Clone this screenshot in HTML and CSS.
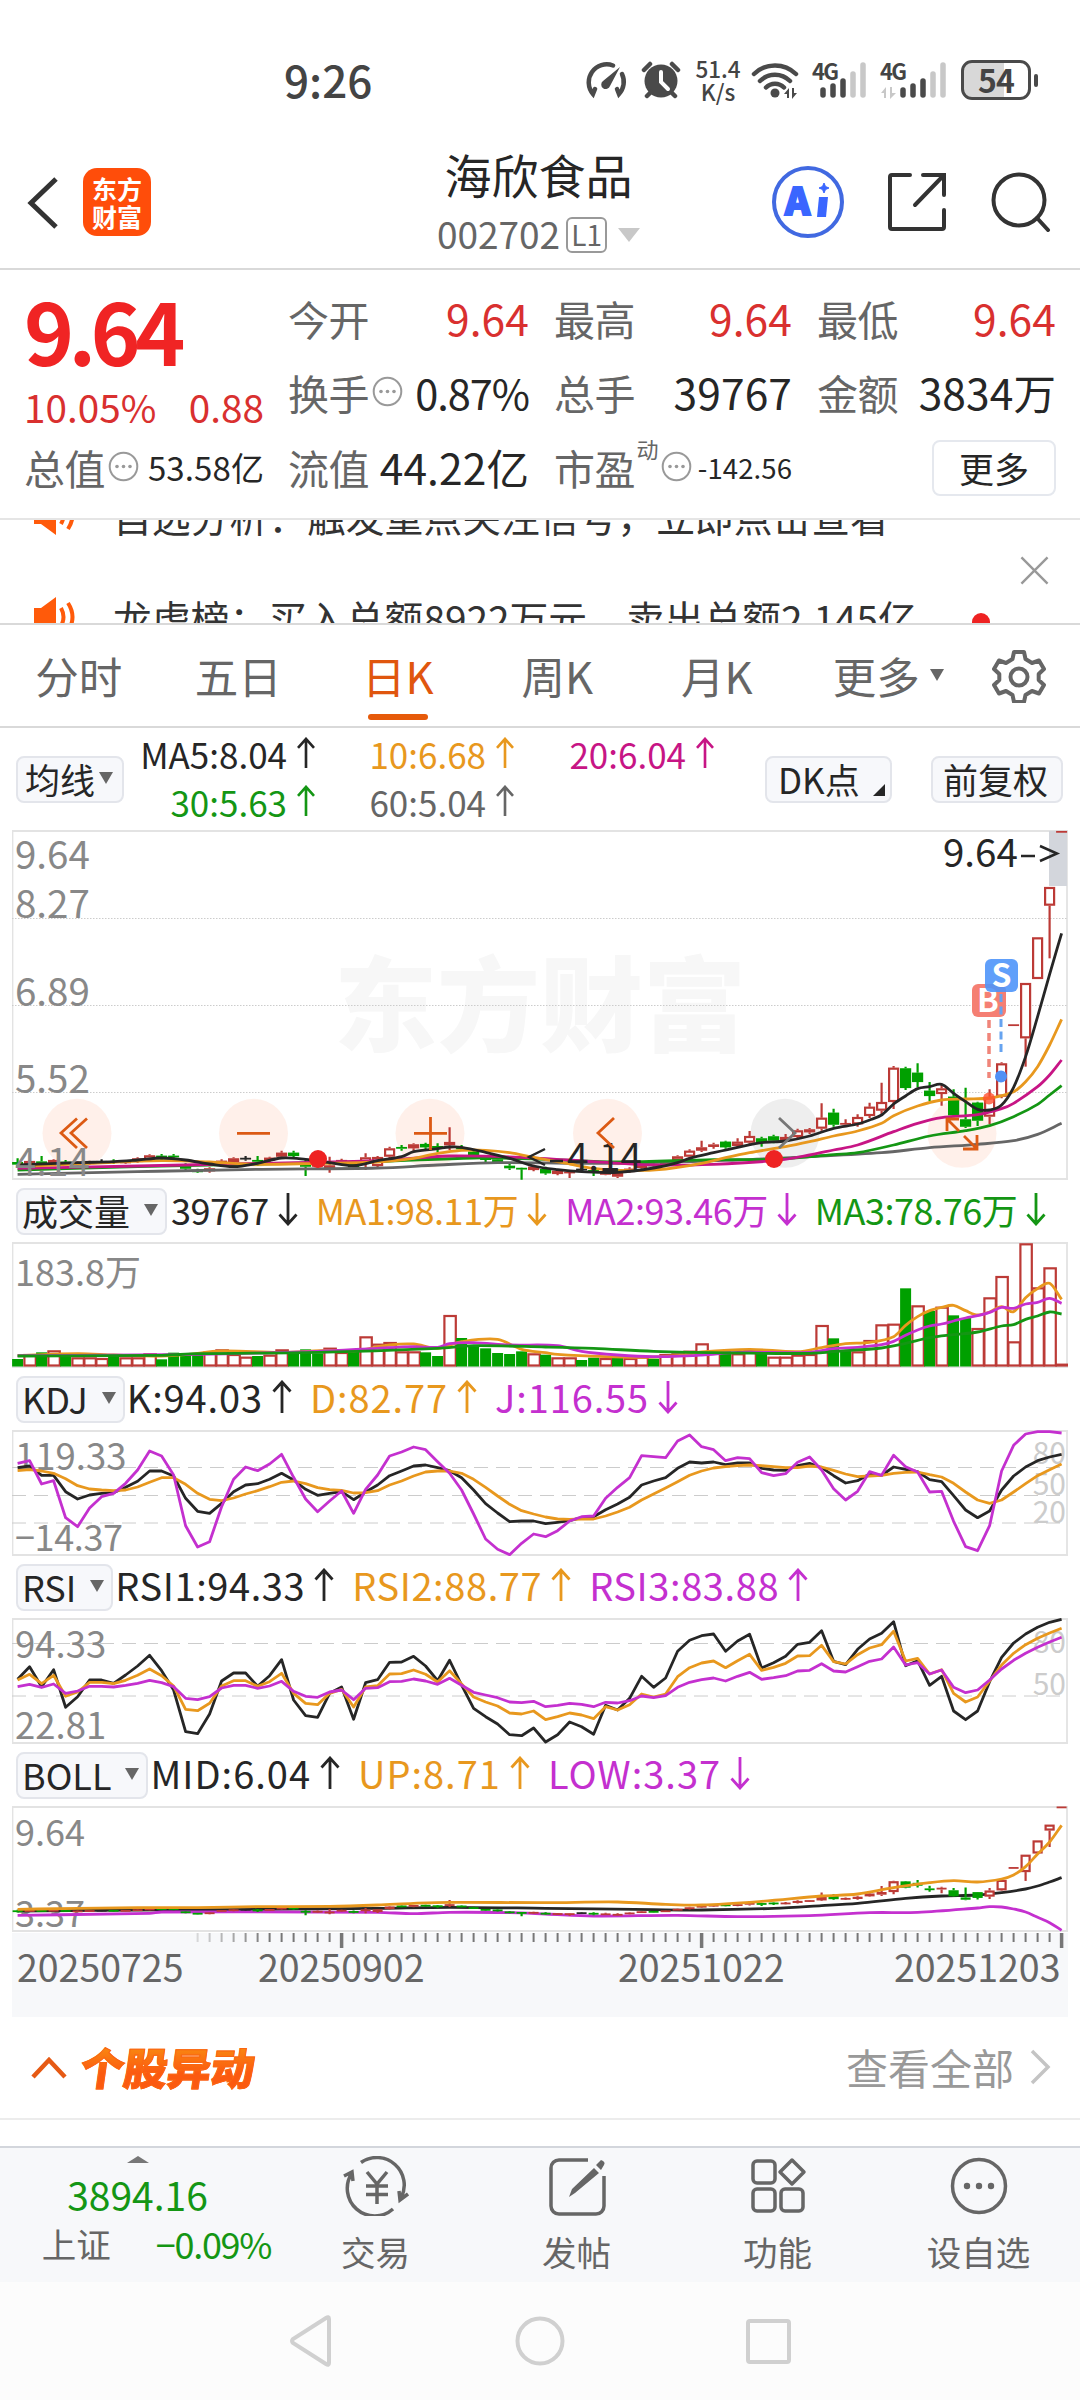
FILE: index.html
```html
<!DOCTYPE html>
<html lang="zh-CN">
<head>
<meta charset="utf-8">
<title>海欣食品 002702</title>
<link rel="stylesheet" href="styles.css">
</head>
<body>
<svg class="defs" width="0" height="0">
  <symbol id="up" viewBox="0 0 20 34"><path d="M10 33V2M1.5 11.5 10 2l8.5 9.5"/></symbol>
  <symbol id="down" viewBox="0 0 20 34"><path d="M10 1v31M1.5 22.500 10 32l8.500-9.500"/></symbol>
  <symbol id="info" viewBox="0 0 31 31"><circle cx="15.500" cy="15.500" r="13.800" fill="none" stroke="#999" stroke-width="2"/><g fill="#999"><circle cx="9" cy="15.500" r="1.800"/><circle cx="15.500" cy="15.500" r="1.800"/><circle cx="22" cy="15.500" r="1.800"/></g></symbol>
  <symbol id="horn" viewBox="0 0 44 42"><path d="M1 12h7L23 1v40L8 30H1z" fill="#ff5a0a"/><path d="M28 12q5 9 0 18M35 7q9 14 0 28" fill="none" stroke="#ff5a0a" stroke-width="4"/></symbol>
</svg>

<header class="status">
  <span class="clock">9:26</span>
  <div class="status-icons">
    <svg width="42" height="38" viewBox="0 0 42 38"><g fill="none" stroke="#4a4a4a" stroke-width="4.500" stroke-linecap="round"><path d="M28 4.500A18 18 0 0 0 8 33l2-5"/><path d="M37 13a18 18 0 0 1-3 20l-2-5"/></g><path d="M35 6 25 25a4.500 4.500 0 1 1-7-5z" fill="#4a4a4a"/></svg>
    <svg width="40" height="38" viewBox="0 0 40 38"><circle cx="20" cy="20" r="16.500" fill="#4a4a4a"/><path d="M3 9l6-6M37 9l-6-6M6 35l4-4M34 35l-4-4" stroke="#4a4a4a" stroke-width="4.500" stroke-linecap="round"/><path d="M20 11v10l7 7" fill="none" stroke="#fff" stroke-width="4" stroke-linecap="round"/></svg>
    <div class="speed"><span>51.4</span><span>K/s</span></div>
    <svg width="48" height="38" viewBox="0 0 48 38"><g fill="none" stroke="#4a4a4a" stroke-width="4.500" stroke-linecap="round"><path d="M3 13a30 30 0 0 1 42 0M9 20a21 21 0 0 1 30 0M15 26.500a12.500 12.500 0 0 1 18 0"/></g><circle cx="24" cy="32" r="4.500" fill="#4a4a4a"/><path d="M33 33l5-6v10h-2v-4zM46 32l-5 6V27h2v5z" fill="#4a4a4a"/></svg>
    <div class="signal"><b>4G</b><svg width="54" height="38" viewBox="0 0 54 38"><g stroke-width="5.500" stroke-linecap="round" stroke="#4a4a4a"><path d="M11 29v5M21 25v9M31 20v14"/><path d="M41 13v21M51 4v30" stroke="#c8c8c8"/></g></svg></div>
    <div class="signal wide"><b>4G</b><svg width="66" height="38" viewBox="0 0 66 38"><path d="M1 32l5-6v11H4v-5zM16 32l-6 6V26h2v6z" fill="#c8c8c8"/><g stroke-width="5.500" stroke-linecap="round" stroke="#4a4a4a"><path d="M23 29v5M33 25v9M43 20v14"/><path d="M53 13v21M63 4v30" stroke="#c8c8c8"/></g></svg></div>
    <div class="battery"><span>54</span></div>
  </div>
</header>

<nav class="titlebar">
  <svg class="back" width="36" height="60" viewBox="0 0 36 60"><path d="M31 6 6 30l25 24" fill="none" stroke="#333" stroke-width="5"/></svg>
  <div class="brand"><span>东方</span><span>财富</span></div>
  <div class="stock">
    <h1>海欣食品</h1>
    <div class="code"><span>002702</span><i class="level">L1</i><i class="caret"></i></div>
  </div>
  <div class="tools">
    <svg width="72" height="72" viewBox="0 0 72 72"><circle cx="36" cy="36" r="34" fill="none" stroke="#4169e1" stroke-width="4"/><text x="13" y="49" class="ai">A</text><path d="M47 31h9l-2 20h-9z" fill="#3a66ff"/><path d="M52 17l1.500 3.500L57 22l-3.500 1.500L52 27l-1.500-3.500L47 22l3.500-1.500z" fill="#3a66ff" stroke="#3a66ff"/></svg>
    <svg width="60" height="60" viewBox="0 0 60 60"><path d="M23 3H5a2 2 0 0 0-2 2v50a2 2 0 0 0 2 2h50a2 2 0 0 0 2-2V38M36 3h21v20M57 3 28 33" fill="none" stroke="#333" stroke-width="4" stroke-linecap="round"/></svg>
    <svg width="62" height="60" viewBox="0 0 62 60"><circle cx="29" cy="28" r="25.500" fill="none" stroke="#333" stroke-width="4"/><path d="M47 46l11 12" stroke="#333" stroke-width="4" stroke-linecap="round"/></svg>
  </div>
</nav>

<section class="quote">
  <div class="price">
    <strong>9.64</strong>
    <div class="chg"><span>10.05%</span><span>0.88</span></div>
    <div class="cell small"><label>总值</label><svg class="info"><use href="#info"/></svg><em>53.58亿</em></div>
  </div>
  <div class="cells">
    <div class="cell red"><label>今开</label><em>9.64</em></div>
    <div class="cell red"><label>最高</label><em>9.64</em></div>
    <div class="cell red"><label>最低</label><em>9.64</em></div>
    <div class="cell tight"><label>换手</label><svg class="info"><use href="#info"/></svg><em>0.87%</em></div>
    <div class="cell"><label>总手</label><em>39767</em></div>
    <div class="cell"><label>金额</label><em>3834万</em></div>
    <div class="cell"><label>流值</label><em>44.22亿</em></div>
    <div class="cell tiny"><label>市盈<sup>动</sup></label><svg class="info"><use href="#info"/></svg><em>-142.56</em></div>
    <button class="more">更多</button>
  </div>
</section>

<section class="ticker">
  <div class="news">
    <p><svg><use href="#horn"/></svg>自选分析：触发重点关注信号，立即点击查看</p>
    <p><svg><use href="#horn"/></svg>龙虎榜：买入总额8922万元，卖出总额2.145亿</p>
  </div>
  <svg class="close" viewBox="0 0 30 30"><path d="M1.500 1.500l27 27M28.500 1.500l-27 27"/></svg>
  <i class="dot"></i>
</section>

<nav class="tabs">
  <a>分时</a><a>五日</a><a class="on">日K</a><a>周K</a><a>月K</a><a class="drop">更多</a>
  <svg width="54" height="54" viewBox="0 0 54 54"><path d="M22 3h10l1.500 7 6.500 4 7-2.500 5 8.500-5.300 5v6l5.300 5-5 8.500-7-2.500-6.500 4L32 53H22l-1.500-7-6.500-4-7 2.500L2 36l5.300-5v-6L2 20l5-8.500L14 14l6.500-4z" fill="none" stroke="#666" stroke-width="4" stroke-linejoin="round"/><circle cx="27" cy="28" r="8.500" fill="none" stroke="#666" stroke-width="4"/></svg>
</nav>

<section class="ma">
  <button class="pill ma-pick">均线<i></i></button>
  <div class="ma-grid">
    <span class="c-k">MA5:8.04<svg><use href="#up"/></svg></span>
    <span class="c-o">10:6.68<svg><use href="#up"/></svg></span>
    <span class="c-m">20:6.04<svg><use href="#up"/></svg></span>
    <span class="c-g">30:5.63<svg><use href="#up"/></svg></span>
    <span class="c-s">60:5.04<svg><use href="#up"/></svg></span>
  </div>
  <button class="pill dk">DK点<i></i></button>
  <button class="pill fq">前复权</button>
</section>

<main class="charts">
  <svg class="chart" id="kline" viewBox="12 10 1056 350" width="1056" height="350"></svg>
  <div class="legend vol"><button class="pill">成交量<i></i></button>
    <span class="c-k">39767<svg><use href="#down"/></svg></span><span class="c-o">MA1:98.11万<svg><use href="#down"/></svg></span><span class="c-p">MA2:93.46万<svg><use href="#down"/></svg></span><span class="c-g">MA3:78.76万<svg><use href="#down"/></svg></span></div>
  <svg class="chart" id="volume" viewBox="12 62 1056 126" width="1056" height="126"></svg>
  <div class="legend kdj"><button class="pill">KDJ<i></i></button>
    <span class="c-k">K:94.03<svg><use href="#up"/></svg></span><span class="c-o">D:82.77<svg><use href="#up"/></svg></span><span class="c-p">J:116.55<svg><use href="#down"/></svg></span></div>
  <svg class="chart" id="kdj" viewBox="12 250 1056 126" width="1056" height="126"></svg>
  <div class="legend"><button class="pill">RSI<i></i></button>
    <span class="c-k">RSI1:94.33<svg><use href="#up"/></svg></span><span class="c-o">RSI2:88.77<svg><use href="#up"/></svg></span><span class="c-p">RSI3:83.88<svg><use href="#up"/></svg></span></div>
  <svg class="chart" id="rsi" viewBox="12 58 1056 126" width="1056" height="126"></svg>
  <div class="legend boll"><button class="pill">BOLL<i></i></button>
    <span class="c-k">MID:6.04<svg><use href="#up"/></svg></span><span class="c-o">UP:8.71<svg><use href="#up"/></svg></span><span class="c-p">LOW:3.37<svg><use href="#down"/></svg></span></div>
  <svg class="chart" id="boll" viewBox="12 246 1056 127" width="1056" height="127"></svg>
  <svg class="axis" id="axis" viewBox="12 373 1056 84" width="1056" height="84"></svg>
</main>

<section class="moves">
  <svg width="38" height="26" viewBox="0 0 38 26"><path d="M3 23 19 6l16 17" fill="none" stroke="#e65a14" stroke-width="4.500"/></svg>
  <h2>个股异动</h2>
  <a>查看全部</a>
  <svg class="go" width="22" height="38" viewBox="0 0 22 38"><path d="M3 3l16 16L3 35" fill="none" stroke="#c4c4c4" stroke-width="3.500"/></svg>
</section>

<footer class="bottombar">
  <div class="index">
    <i></i><b>3894.16</b>
    <div><span>上证</span><em>−0.09%</em></div>
  </div>
  <a><svg viewBox="0 0 66 60"><g fill="none" stroke="#666" stroke-width="3.500"><path d="M18 6.500A27.500 27.500 0 0 1 58 42M65 38l-8 6-1-9"/><path d="M50 53A27.500 27.500 0 0 1 9 17M1 20l8-4 1 9"/><path d="M24 16l10 12 10-12M34 28v20M23 30h22M23 38.500h22"/></g></svg>交易</a>
  <a><svg viewBox="0 0 66 60"><path d="M44 4H15a8 8 0 0 0-8 8v38a8 8 0 0 0 8 8h37a8 8 0 0 0 8-8V20" fill="none" stroke="#666" stroke-width="3.500"/><path d="M50 12l5 5-24 20-6 4 3-8zM52 9l5-5q5 2 3 5l-3 5z" fill="#666"/></svg>发帖</a>
  <a><svg viewBox="0 0 66 60"><g fill="none" stroke="#666" stroke-width="3.500" stroke-linejoin="round"><rect x="8" y="5" width="22" height="22" rx="4"/><rect x="8" y="33" width="22" height="22" rx="4"/><rect x="36" y="33" width="22" height="22" rx="4"/><path d="M47 4l12 12-12 12-12-12z"/></g></svg>功能</a>
  <a><svg viewBox="0 0 66 60"><circle cx="33" cy="30" r="26.500" fill="none" stroke="#666" stroke-width="3.500"/><g fill="#666"><circle cx="21" cy="30" r="3.200"/><circle cx="33" cy="30" r="3.200"/><circle cx="45" cy="30" r="3.200"/></g></svg>设自选</a>
</footer>

<div class="sysnav">
  <svg viewBox="0 0 50 54"><path d="M42 5v44q0 3-3 1L6 29q-2-2 0-4L39 4q3-2 3 1z"/></svg>
  <svg viewBox="0 0 50 54"><circle cx="25" cy="27" r="22.500"/></svg>
  <svg viewBox="0 0 50 54"><rect x="5" y="7" width="41" height="41" rx="2"/></svg>
</div>
<script src="script.js"></script>
</body>
</html>
```
FILE: styles.css
```css
* { box-sizing: border-box; }
body { margin: 0; width: 1080px; background: #fff; color: #262626; font-family: "Noto Sans CJK SC", "Noto Sans", sans-serif; line-height: 1; }
button { font: inherit; color: inherit; padding: 0; white-space: nowrap; }
h1, h2, p { margin: 0; font-weight: 400; }
i, em { font-style: normal; }
.defs { display: block; height: 0; }
use { stroke: inherit; }

.status { display: flex; justify-content: space-between; align-items: center; height: 160px; padding: 0 49px 0 284px; color: #444; }
.clock { font-size: 44px; font-weight: 500; margin-top: -3px; }
.status-icons { display: flex; align-items: center; }
.status-icons > * { flex: none; }
.status-icons > svg:nth-child(2) { margin-left: 14px; }
.speed { display: flex; flex-direction: column; align-items: center; width: 48px; margin: 0 9px 0 13px; font-size: 22.500px; line-height: 23px; font-weight: 500; }
.signal { position: relative; width: 54px; height: 38px; margin-left: 13px; }
.signal.wide { width: 66px; margin-left: 14px; }
.signal b { position: absolute; left: 0; top: -2px; font-size: 22px; letter-spacing: -1.800px; }
.battery { position: relative; width: 70px; height: 40px; margin: 0 0 0 15px; border: 3px solid #4a4a4a; border-radius: 11px; background: linear-gradient(90deg, #d8d8d8 62%, #fff 62%); display: flex; align-items: center; justify-content: center; font-size: 32px; font-weight: 700; letter-spacing: -1px; }
.battery span { margin-top: -2px; }
.battery::after { content: ""; position: absolute; right: -10px; top: 11px; width: 4px; height: 13px; border-radius: 2px; background: #4a4a4a; }

.titlebar { display: flex; align-items: center; height: 110px; padding: 0 28px 24px 25px; border-bottom: 2px solid #d9d9d9; }
.brand { display: flex; flex-direction: column; justify-content: center; width: 68px; height: 68px; margin-left: 22px; border-radius: 14px; background: #ff4d0a; color: #fff; font-size: 25px; font-weight: 700; line-height: 28px; text-align: center; }
.back { margin-top: 2px; }
.stock { flex: 1; display: flex; flex-direction: column; align-items: center; padding-left: 238px; height: 110px; align-self: flex-start; margin-top: -10px; white-space: nowrap; }
.stock h1 { font-size: 47px; line-height: 48px; }
.code { display: flex; align-items: center; margin-top: 19px; height: 36px; color: #666; font-size: 37px; }
.code span { margin-top: -3px; }
.level { display: block; width: 41px; height: 36px; margin: 0 11px 0 6px; border: 2px solid #999; border-radius: 6px; font-size: 28px; line-height: 30px; text-align: center; }
.caret { border: 11px solid transparent; border-top: 14px solid #c8c8c8; border-bottom: 0; }
.tools { display: flex; align-items: center; gap: 43px; margin-left: 84px; }
.ai { font: 900 38px "Noto Sans CJK SC", sans-serif; fill: #3a66ff; stroke: #3a66ff; stroke-width: 2; }

.quote { display: flex; height: 250px; padding: 0 24px; border-bottom: 2px solid #e5e5e5; }
.price { width: 265px; padding-right: 25px; display: grid; grid-template-rows: 98px 72px 52px; color: #d9302f; padding-top: 1px; }
.price strong { color: #f02424; font-size: 85px; line-height: 116px; letter-spacing: -5.600px; }
.chg { display: flex; justify-content: space-between; align-items: center; font-size: 38.700px; padding-top: 3px; }
.cells { flex: 1; display: grid; grid-template-columns: 241px 238px 239px; column-gap: 25px; grid-template-rows: 74px 75px 75px; padding-top: 11px; margin-left: -1px; }
.cell { display: flex; align-items: center; justify-content: space-between; color: #262626; font-size: 42.500px; white-space: nowrap; }
.cell label { position: relative; font-size: 41px; letter-spacing: -.5px; color: #666; }
.cell em { letter-spacing: .1px; margin-left: auto; }
.cell.red em { color: #d9302f; }
.cell.tight em { font-size: 41.500px; letter-spacing: -1px; }
.cell sup { position: absolute; right: -23px; top: -10px; font-size: 22px; line-height: 1; }
.cell.tiny .info { margin-left: 26px; }
.cell.tiny em { font-size: 27.500px; }
.cell.small em { font-size: 33px; }
.info { width: 31px; height: 31px; margin-left: 3px; flex: none; margin-top: -2px; }
.more { justify-self: end; align-self: center; width: 124px; height: 56px; border: 2px solid #e5e8ee; border-radius: 8px; background: #fff; font-size: 35px; color: #262626; }

.ticker { position: relative; height: 105px; border-bottom: 2px solid #d9d9d9; overflow: hidden; }
.news { display: flex; flex-direction: column; gap: 62px; margin-top: -25px; }
.news p { display: flex; align-items: center; height: 40px; padding-left: 33px; font-size: 38.800px; white-space: nowrap; color: #333; }
.news svg { width: 44px; height: 42px; margin-right: 36px; }
.close { position: absolute; right: 31px; top: 36px; width: 29px; height: 29px; fill: none; stroke: #999; stroke-width: 2.500; }
.dot { position: absolute; left: 972px; top: 93px; width: 18px; height: 18px; border-radius: 50%; background: #ee2222; }

.tabs { display: flex; align-items: center; height: 103px; border-bottom: 2px solid #d9d9d9; font-size: 43.500px; color: #666; }
.tabs a { position: relative; width: 159.500px; height: 100%; display: flex; justify-content: center; align-items: center; padding-right: 2px; }
.tabs .on { color: #e0560e; }
.tabs .on::after { content: ""; position: absolute; bottom: 6px; width: 60px; height: 6px; border-radius: 3px; background: #e65a0a; }
.tabs .drop::after { content: ""; position: absolute; right: 13px; top: 44px; border: 7px solid transparent; border-top: 12px solid #666; border-bottom: 0; }
.tabs svg { margin-left: 35px; }

.pill { display: flex; align-items: center; height: 47px; border: 2px solid #e3e5eb; border-radius: 8px; background: #f7f8fb; color: #262626; font-size: 35px; padding-bottom: 2px; }
.pill i { border: 7.500px solid transparent; border-top: 12px solid #666; border-bottom: 0; }
.c-k { color: #262626; } .c-o { color: #e8981e; } .c-m { color: #c71585; } .c-g { color: #149614; } .c-s { color: #666; } .c-p { color: #c430cf; }
.ma { display: flex; height: 102px; align-items: center; padding: 0 16px; }
.ma-pick { width: 108px; padding-left: 7px; }
.ma-pick i { margin-left: 4px; }
.ma-grid { display: grid; grid-template-columns: 192px 199px 200px; grid-template-rows: 48px 48px; font-size: 35px; width: 591px; margin-top: -4px; }
.ma-grid span { display: flex; justify-content: flex-end; align-items: center; white-space: nowrap; }
.ma-grid svg, .legend svg { width: 20px; height: 34px; fill: none; stroke: currentColor; stroke-width: 2.800; margin-left: 9px; }
.ma-grid svg { height: 32px; }
.dk { position: relative; width: 127px; padding-left: 11px; margin-left: 50px; }
.dk i { position: absolute; right: 5px; bottom: 5px; border: 0; border-left: 12px solid transparent; border-bottom: 12px solid #262626; }
.fq { width: 132px; margin-left: 39px; padding-left: 10px; }

.charts { padding: 0 12px; display: flex; flex-direction: column; }
.chart { display: block; }
.legend { display: flex; align-items: center; height: 62px; padding-left: 4px; font-size: 38px; white-space: nowrap; }
.legend .pill { padding: 0 7px 2px 4px; font-size: 36px; margin-right: 2px; }
.legend .pill i { margin-left: 14px; }
.legend span { display: flex; align-items: center; margin-right: 18px; padding-bottom: 4px; letter-spacing: .6px; }
.legend.kdj span { letter-spacing: .9px; }
.legend.boll span { letter-spacing: 1px; }
.legend.vol { font-size: 36px; }
.legend.vol .pill { margin-right: 4px; }
.legend.vol span { letter-spacing: -.45px; }
.axis { display: block; background: #f7f8fa; }
svg text { font-family: "Noto Sans CJK SC", sans-serif; }
.scale { fill: #888; }
.level-label { fill: #ccc; font-size: 30px; text-anchor: end; }
.mark { fill: #262626; font-size: 38.500px; }
.badge { fill: #fff; font-size: 32px; font-weight: 700; text-anchor: middle; }
.watermark { fill: #f7f7f7; font-size: 103px; font-weight: 900; }
.date { fill: #666; }

.moves { display: flex; align-items: center; height: 103px; padding: 0 29px 2px 30px; border-bottom: 2px solid #ececec; }
.moves h2 { margin-left: 13px; font-size: 43.500px; line-height: 60px; font-weight: 900; transform: skewX(-8deg); background: linear-gradient(#f98a10 15%, #fb5a10 60%); -webkit-background-clip: text; background-clip: text; color: transparent; -webkit-text-stroke: 1px #fb6510; }
.moves a { margin-left: auto; font-size: 42px; color: #999; }
.moves .go { margin-left: 15px; }

.bottombar { display: flex; height: 136px; margin-top: 26px; background: #f7f8fa; border-top: 2px solid #d3d6dc; color: #666; font-size: 34.500px; }
.index { position: relative; width: 275px; display: flex; flex-direction: column; align-items: center; padding-top: 26px; gap: 11px; }
.index > i { position: absolute; top: 8px; left: 127px; border: 11px solid transparent; border-bottom: 7px solid #777; border-top: 0; }
.index b { font-weight: 400; font-size: 39px; line-height: 40px; color: #149614; }
.index div { display: flex; align-items: center; gap: 45px; line-height: 36px; padding-left: 38px; }
.index em { font-size: 36px; color: #149614; letter-spacing: -1.300px; }
.bottombar a { width: 201px; display: flex; flex-direction: column; align-items: center; padding-top: 8px; gap: 18px; }
.bottombar a svg { width: 66px; height: 60px; flex: none; }
.sysnav { display: flex; justify-content: center; gap: 178px; height: 118px; padding-top: 32px; background: #fcfcfc; }
.sysnav svg { width: 50px; height: 54px; fill: none; stroke: #d0d0d0; stroke-width: 4; }
```
FILE: script.js
```js
// Bars sit on a 12px pitch; series heights are stored in thirds of a pixel.
const COUNT = 88;
const X = i => 17.6 + 12 * i;
const RED = '#bc3a36', GREEN = '#00a000', BLACK = '#262626', ORANGE = '#e8981e', PURPLE = '#c430cf', MAGENTA = '#c71585', LEAF = '#149614', GREY = '#666';
const nums = s => s.trim().split(/\s+/).map(Number);
const $ = id => document.getElementById(id);

function path(pts, color, w = 2.8) {
  return `<path d="M${pts.map(([i, v]) => `${X(i).toFixed(1)} ${(v / 3).toFixed(1)}`).join('L')}" fill="none" stroke="${color}" stroke-width="${w}" stroke-linejoin="round"/>`;
}
const full = (s, c) => path(nums(s).map((v, i) => [i, v]), c);

// Smooth curve through sparse [index value] pairs.
function curve(s, color, w = 2.8) {
  const n = nums(s), p = [];
  for (let k = 0; k < n.length; k += 2) p.push([X(n[k]), n[k + 1] / 3]);
  const m = p.map((_, k) => {
    const a = p[Math.max(0, k - 1)], b = p[Math.min(p.length - 1, k + 1)];
    return (b[1] - a[1]) / (b[0] - a[0]);
  });
  let d = `M${p[0]}`;
  for (let k = 1; k < p.length; k++) {
    const h = (p[k][0] - p[k - 1][0]) / 3;
    d += `C${p[k - 1][0] + h} ${p[k - 1][1] + m[k - 1] * h} ${p[k][0] - h} ${p[k][1] - m[k] * h} ${p[k]}`;
  }
  return `<path d="${d}" fill="none" stroke="${color}" stroke-width="${w}"/>`;
}
const frame = (y, h) => `<path d="M12.500 ${y}V${y + h}M1067 ${y}V${y + h}M12 ${y + 1}H1068M12 ${y + h - 1}H1068" fill="none" stroke="#e3e3e3" stroke-width="1.800"/>`;
const rule = (y, dash, c) => `<path d="M12 ${y}H1067" stroke="${c}" stroke-width="1" stroke-dasharray="${dash}"/>`;
const label = (x, y, t, size, cls = 'scale') => `<text x="${x}" y="${y}" class="${cls}" font-size="${size}">${t}</text>`;

// Candles: [high, body top, body bottom, low], G falling, R rising, K unchanged
const candles = `G 1015 1026 1034 1042|R 1020 1023 1032 1036|G 1008 1024 1032 1036|R 1018 1020 1030 1033|G 1020 1025 1030 1034|R 1024 1028 1036 1040|R 1022 1025 1032 1034|K 1018 1024 1027 1030|G 1018 1024 1028 1032|R 1020 1023 1030 1032|R 1012 1015 1026 1028|R 1003 1006 1020 1022|G 1002 1007 1012 1020|G 1002 1007 1012 1020|G 1030 1034 1046 1050|G 1046 1052 1056 1058|R 1042 1045 1054 1058|R 1018 1022 1032 1036|R 1012 1015 1026 1030|K 1008 1014 1018 1022|G 1008 1020 1025 1038|R 1010 1013 1022 1026|R 992 998 1010 1014|G 992 998 1008 1016|G 1020 1030 1040 1068|R 1022 1030 1040 1045|R 1010 1036 1048 1058|R 1016 1020 1030 1036|G 1024 1032 1042 1050|R 1000 1012 1030 1050|R 1008 1011 1038 1046|R 980 985 1010 1014|G 975 981 986 992|R 970 973 985 992|G 968 972 982 990|G 970 978 986 996|R 922 966 976 990|G 975 981 988 992|G 988 995 1005 1010|G 1008 1014 1020 1026|G 1014 1018 1026 1032|G 1030 1037 1045 1050|G 1043 1044 1048 1079|R 1034 1040 1050 1054|G 1040 1047 1060 1064|R 1048 1052 1062 1066|R 1054 1056 1059 1074|K 1042 1047 1050 1054|G 1040 1050 1058 1068|R 1045 1055 1064 1066|R 1050 1058 1070 1074|R 1042 1046 1056 1058|R 1030 1034 1044 1046|G 1028 1033 1039 1042|R 1022 1025 1036 1038|R 1006 1009 1022 1024|R 988 992 1010 1014|R 962 982 992 996|R 968 973 981 986|G 962 965 982 986|R 955 965 978 983|R 933 948 968 976|G 950 955 966 980|G 944 949 962 970|R 942 951 960 964|R 926 931 951 956|R 924 928 937 942|R 850 893 926 932|G 866 878 914 920|R 898 909 914 920|R 883 891 913 920|R 848 860 888 894|R 788 846 872 884|R 738 743 846 867|G 740 745 804 810|G 730 758 786 802|G 786 812 828 843|R 795 805 822 857|G 808 830 886 892|G 803 898 920 924|G 845 848 902 918|R 808 832 890 912|R 727 730 830 835|R 613 613 618 618|R 489 489 655 740|R 352 352 477 477|R 201 201 257 415|R 33 33 38 38`
  .split('|').map(s => s.split(' ').map((v, k) => k ? +v : v));

function drawCandles(map, half) {
  return candles.map(([c, hi, a, b, lo], i) => {
    const col = c === 'G' ? GREEN : c === 'K' ? BLACK : RED, x = X(i);
    const [H, A, B, L] = [hi, a, b, lo].map(v => map(v) / 3);
    let s = `<path d="M${x} ${H}V${A}M${x} ${B}V${L}" stroke="${col}" stroke-width="2.200"/>`;
    if (B - A < 3) s += `<path d="M${x - half} ${(A + B) / 2}h${2 * half}" stroke="${col}" stroke-width="${Math.max(1.8, B - A)}"/>`;
    else s += `<rect x="${x - half + 1}" y="${A + 1}" width="${2 * half - 2}" height="${Math.max(.5, B - A - 2)}" fill="${c === 'R' ? '#fff' : col}" stroke="${col}" stroke-width="2.200"/>`;
    return s;
  }).join('');
}

const round = (x, c = '#ff6e32') => `<circle cx="${x}" cy="313.300" r="34.500" fill="${c}" fill-opacity=".1"/>`;
$('kline').innerHTML =
  label(334, 224, '东方财富', 103, 'watermark') +
  frame(10, 350) + [98.5, 185.5, 272.5].map(y => rule(y, '1.5 1.5', '#ccc')).join('') +
  '<rect x="1049" y="11" width="18" height="55" fill="#d3d6dc"/>' +
  round(77) + round(253.5) + round(430) + round(607.5) + round(785, '#555') + round(962) +
  drawCandles(v => v, 5.5) +
  curve('0 1063 10 1055 20 1048 30 1044 35 1035 40 1028 50 1030 60 1020 66 1010 72 998 76 983 80 973 83 962 85 943 87 910', GREY) +
  curve('0 1050 10 1040 20 1032 30 1025 38 1014 44 1018 50 1026 58 1019 63 1018 68 1004 70 998 73 975 76 948 79 932 81 917 83 890 85 853 86 825 87 797', LEAF) +
  curve('0 1045 10 1038 20 1030 30 1022 36 1008 42 1012 48 1025 53 1035 58 1033 63 1022 66 1005 68 990 70 975 73 935 75 910 77 893 80 884 82 866 83 850 85 800 86 765 87 720', MAGENTA) +
  curve('0 1040 6 1030 12 1022 16 1026 20 1033 25 1030 30 1026 33 1015 35 1000 37 991 39 991 41 998 43 1012 46 1032 48 1045 51 1052 54 1047 57 1030 59 1013 61 998 64 980 66 965 68 948 70 933 72 910 73 887 75 858 77 840 79 837 81 834 83 815 84 785 85 740 86 675 87 598', ORANGE) +
  curve('0 1035 5 1028 8 1025 10 1020 12 1014 14 1020 16 1032 18 1040 20 1030 22 1014 24 1018 26 1028 28 1037 30 1022 32 1010 33 995 35 986 36 981 37 982 39 997 41 1015 43 1038 45 1049 47 1055 50 1057 53 1044 55 1028 56 1015 58 998 60 982 62 968 64 963 66 948 68 925 70 912 71 900 72 885 73 852 74 828 75 806 76 800 77 793 78 820 79 845 80 868 81 870 82 855 83 802 84 710 85 590 86 463 87 340', BLACK) +
  label(15, 49.3, '9.64', 38.5) + label(15, 98, '8.27', 38.5) + label(15, 186, '6.89', 38.5) + label(15, 273, '5.52', 38.5) + label(15, 356, '4.14', 38.5) +
  '<text x="943" y="47" class="mark">9.64</text><path d="M1021 36h14M1040 26l17 7.500-17 7.500" fill="none" stroke="#262626" stroke-width="2.500"/><text x="567" y="351" class="mark">4.14</text>' +
  '<path d="M545 329l-16 8 16 8M550 341h13" fill="none" stroke="#262626" stroke-width="2.500"/>' +
  '<circle cx="318" cy="339" r="9" fill="#ee2222"/><circle cx="774" cy="339" r="9" fill="#ee2222"/>' +
  '<g fill="none" stroke="#dc5a14" stroke-width="2.800"><path d="M77 298.500L61 313l16 15M87 298.500L71 313l16 15M237 313.300h33M414 313.300h33M430.500 297v33M614 298l-16 15 16 15M959 299h-12v12M947 299l12 12M977 315v14h-14M977 329l-13-13"/><path d="M779 298l16 15-16 15" stroke="#777"/></g>' +
  '<path d="M989 200v58" stroke="#f0857a" stroke-width="3.500" stroke-dasharray="8 5"/><rect x="972" y="164" width="34" height="33" rx="6" fill="#f57f73"/><text x="988" y="192" class="badge">B</text>' +
  '<rect x="985" y="139" width="33" height="33" rx="6" fill="#4f95fa" fill-opacity=".9"/><path d="M1001 174v59" stroke="#66a3f0" stroke-width="3" stroke-dasharray="8 4.500"/><text x="1001.500" y="167" class="badge">S</text>' +
  '<circle cx="1001" cy="256.500" r="6" fill="#5090f5"/><circle cx="989" cy="278.500" r="6" fill="#ff5030" fill-opacity=".8"/>';

const bars = `G537 R522 G517 R511 G530 R532 R532 R534 G530 R532 R532 R520 G538 G518 G522 G525 R514 R508 R522 R530 G528 R524 R508 G518 G508 G520 R503 R516 G516 R469 R491 R486 R514 R514 G517 G528 R405 G474 G500 G505 G519 G522 G514 R520 G524 R532 R532 G540 G533 R534 G530 R534 R530 G536 R522 R520 R512 R490 R516 G514 R520 R508 G514 R530 R530 R524 R522 R435 G475 G512 R514 R480 R433 R431 G325 R376 G393 R380 G406 G414 R444 R352 R288 R484 R190 R322 R262 R551`.split(' ');
$('volume').innerHTML = frame(62, 126) + label(15, 106, '183.8万', 36) +
  bars.map((b, i) => {
    const y = +b.slice(1) / 3, x = X(i), h = 186.5 - y;
    return b[0] === 'G' ? `<rect x="${x - 5.5}" y="${y}" width="11" height="${h}" fill="${GREEN}"/>`
      : `<rect x="${x - 5.2}" y="${y + 1}" width="11.400" height="${Math.max(.5, h - 2)}" fill="#fff" stroke="${RED}" stroke-width="2.200"/>`;
  }).join('') +
  curve('0 527 5 521 8 525 12 528 14 524 17 513 22 517 26 511 28 513 31 495 33 492 35 505 37 485 40 478 42 508 44 518 45 523 49 530 52 532 55 527 57 516 61 508 65 515 67 503 69 491 71 487 73 470 74 436 75 410 76 392 77 382 78 376 79 392 80 405 81 396 82 380 83 395 84 353 85 326 86 310 87 358', ORANGE) +
  curve('0 527 15 523 25 514 30 505 33 500 35 502 36 491 38 488 41 495 45 497 47 514 50 525 53 530 57 525 60 517 66 517 68 506 70 502 72 494 73 484 74 466 75 450 76 438 77 432 78 423 79 414 80 407 81 397 82 382 83 385 84 372 85 367 86 355 87 370', PURPLE) +
  curve('0 528 12 526 15 521 25 517 35 505 38 497 44 501 48 505 53 514 60 519 66 520 69 512 72 504 74 490 76 473 78 464 80 456 82 438 83 434 84 418 85 408 86 396 87 402', LEAF);

const oscGrid = ys => ys.map(y => rule(y, '14 8', '#ccc')).join('');
$('kdj').innerHTML = frame(250, 126) + oscGrid([287.5, 315.5, 343]) +
  label(15, 290, '119.33', 36.5) + label(15, 371, '−14.37', 36).replace('>−', ' textLength="108">−') + label(1066, 284, '80', 30, 'level-label') + label(1066, 315, '50', 30, 'level-label') + label(1066, 343, '20', 30, 'level-label') +
  full('863 858 886 886 935 957 945 940 938 922 904 873 873 888 955 994 1000 970 935 915 911 898 880 900 928 946 940 935 959 936 915 887 873 858 855 863 872 893 930 971 999 1025 1023 1023 1031 1027 1022 1013 1010 989 972 952 915 903 893 865 846 849 846 854 849 849 865 870 871 857 850 863 887 909 902 882 886 861 868 875 899 905 947 990 1013 993 930 888 861 842 831 823', BLACK) +
  full('872 869 873 880 896 917 927 930 932 930 921 907 893 893 913 940 958 962 954 942 932 920 907 903 911 923 929 931 939 938 932 915 903 888 876 873 873 880 898 922 948 973 992 1002 1011 1017 1018 1017 1017 1008 996 982 960 942 924 905 886 873 864 860 857 855 857 860 863 863 858 861 871 882 890 888 886 880 877 876 884 891 910 936 960 970 960 936 911 887 869 852', ORANGE) +
  full('850 842 912 902 1013 1040 984 950 940 910 870 813 828 885 1037 1101 1085 980 898 861 872 852 823 892 957 995 963 933 1000 928 885 828 816 801 809 845 880 930 1002 1077 1108 1124 1090 1062 1070 1052 1023 1010 1008 955 922 893 827 830 833 783 765 800 809 842 833 836 878 887 881 847 831 870 926 960 934 875 886 826 860 876 936 934 1024 1100 1112 1037 873 796 762 755 755 759', PURPLE);

$('rsi').innerHTML = frame(58, 126) + oscGrid([83.5, 136]) +
  label(15, 98, '94.33', 36.5) + label(15, 179, '22.81', 36.5) + label(1066, 93, '80', 30, 'level-label') + label(1066, 135, '50', 30, 'level-label') +
  full('358 320 380 329 442 410 360 360 370 345 318 286 332 390 515 521 462 363 339 339 379 347 299 420 467 472 400 381 478 368 359 307 306 289 318 362 301 375 445 470 492 524 527 504 546 524 486 500 523 436 450 415 349 382 354 274 241 227 222 274 243 223 324 308 289 253 247 212 304 314 268 237 220 185 317 302 376 349 453 479 453 365 292 249 222 202 187 178', BLACK) +
  full('360 343 371 346 409 396 367 367 371 361 346 327 347 378 448 452 430 378 362 362 379 365 340 400 430 434 400 388 441 381 377 342 341 330 343 366 332 372 411 426 438 459 462 453 479 470 459 465 476 440 450 434 402 411 402 350 323 309 303 323 302 283 331 322 310 288 287 256 305 312 284 264 254 214 303 295 342 329 400 426 411 363 315 280 254 235 219 205', ORANGE) +
  full('380 373 382 372 400 393 379 379 381 376 370 361 368 380 415 419 410 384 376 376 385 378 364 394 409 412 396 390 419 385 383 365 364 357 363 373 355 376 397 405 413 426 428 424 440 436 430 433 440 427 429 422 408 413 407 382 367 359 354 363 349 337 358 353 347 333 331 311 333 336 320 304 297 261 315 308 342 330 382 398 390 360 327 301 280 262 246 232', PURPLE);

$('boll').innerHTML = frame(246, 126) +
  label(15, 286, '9.64', 36) + label(15, 367, '3.37', 36) +
  curve('0 1053 20 1048 30 1045 36 1042 44 1045 53 1049 57 1050 63 1045 67 1037 70 1030 74 1015 77 1008 80 1005 82 998 84 987 85 978 86 966 87 953', BLACK) +
  curve('0 1066 11 1060 12 1056 30 1057 33 1061 36 1057 41 1058 44 1062 48 1068 55 1066 60 1070 66 1067 71 1058 75 1057 80 1044 81 1040 82 1041 83 1047 84 1056 85 1072 86 1088 87 1111', PURPLE) +
  drawCandles(v => 742 + (v - 35) * .3132, 5) +
  curve('0 1048 5 1045 10 1043 15 1043 20 1040 26 1039 30 1035 33 1030 36 1027 44 1028 50 1026 54 1033 57 1035 62 1024 67 1008 70 1002 73 983 76 968 78 962 80 966 82 957 83 945 84 920 85 882 86 846 87 796', ORANGE);

let ticks = '';
for (let i = 15; i < COUNT; i++) {
  const major = i === 27 || i === 57 || i === 87;
  ticks += `<path d="M${X(i)} 373v${major ? 15 : 9}" stroke="#777" stroke-width="${major ? 3.5 : 2}" opacity="${Math.min(1, (i - 13) / 8)}"/>`;
}
$('axis').innerHTML = ticks + ['20250725', '20250902', '20251022', '20251203'].map((t, k) => label([17, 258, 618, 894][k], 422, t, 37.5, 'date')).join('');
```
